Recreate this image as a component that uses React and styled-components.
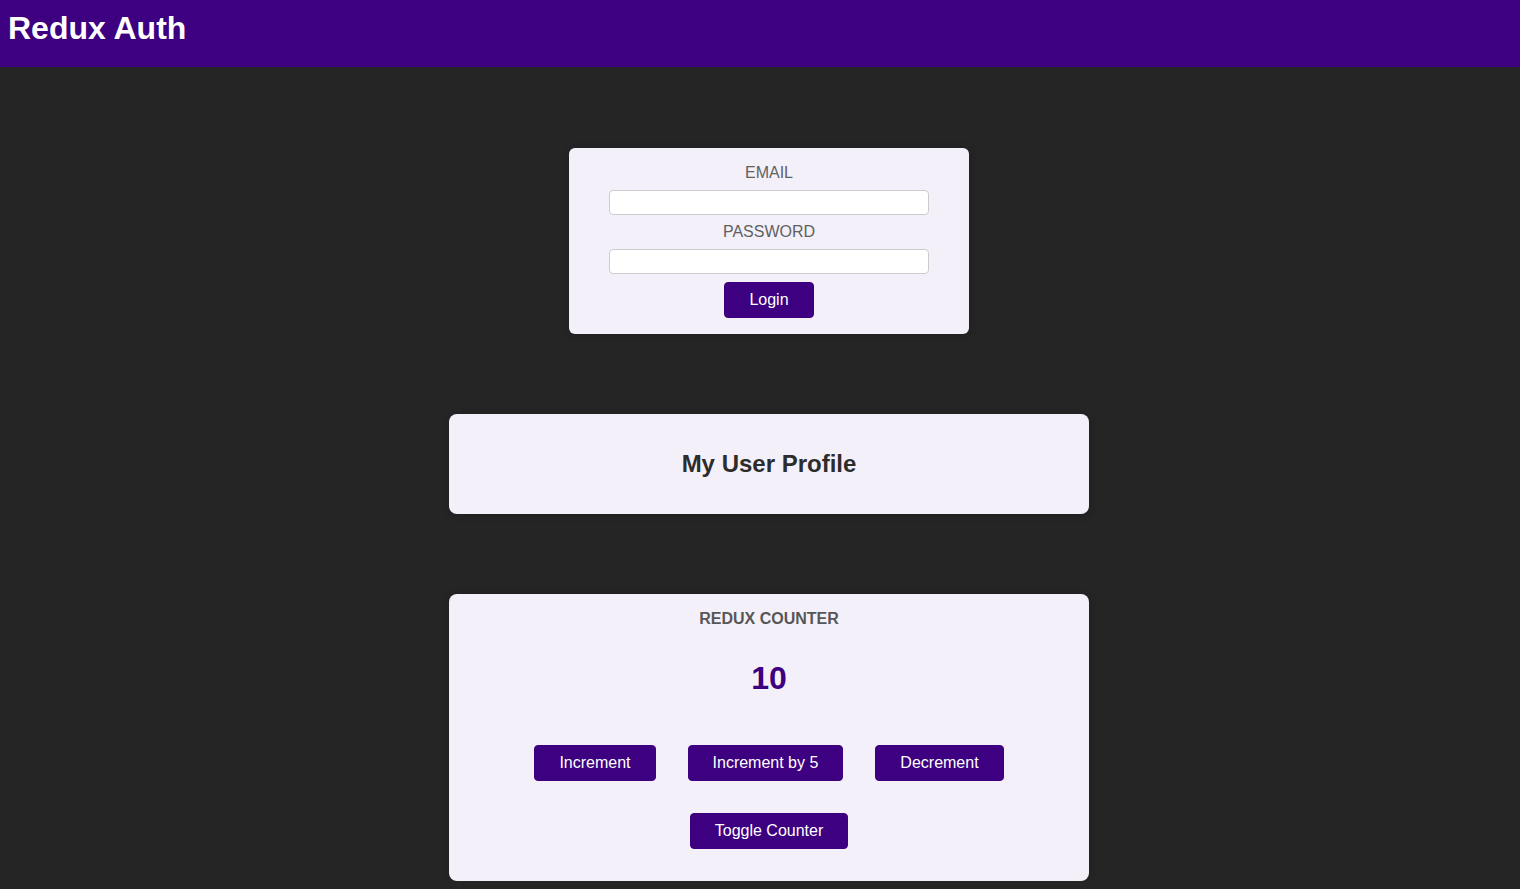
import React from "react";
import styled, { createGlobalStyle } from "styled-components";

const GlobalStyle = createGlobalStyle`
  * { box-sizing: border-box; }
  html, body { margin: 0; padding: 0; }
  body {
    background-color: #252525;
    font-family: "Liberation Sans", Arial, sans-serif;
  }
`;

const Header = styled.header`
  height: 67px;
  padding: 10px 8px 0;
  background-color: #3c0080;
  display: flex;
  align-items: flex-start;
`;

const Title = styled.h1`
  margin: 0;
  color: #ffffff;
  font-size: 2rem;
  font-weight: bold;
`;

const Main = styled.main`
  display: flex;
  flex-direction: column;
  align-items: center;
  gap: 80px;
  padding: 81px 0 0 18px;
`;

const Card = styled.section`
  width: ${(p) => p.$width};
  border-radius: ${(p) => p.$radius || "8px"};
  box-shadow: 0 1px 8px rgba(0, 0, 0, 0.2);
  padding: 1rem;
  text-align: center;
  background-color: #f4f0fa;
`;

const Control = styled.div`
  margin-bottom: 0.5rem;
`;

const Label = styled.label`
  display: block;
  color: #616161;
  text-transform: uppercase;
  margin-bottom: 0.5rem;
  font-size: 16px;
`;

const Input = styled.input`
  display: block;
  width: 20rem;
  height: 25px;
  margin: auto;
  border-radius: 4px;
  padding: 0.25rem;
  border: 1px solid #ccc;
  background: #fff;
  font-family: "Liberation Sans", Arial, sans-serif;
`;

const Button = styled.button`
  font: inherit;
  font-size: 16px;
  cursor: pointer;
  background-color: #3c0080;
  border: 1px solid #3c0080;
  color: #ffffff;
  padding: 0.5rem 1.5rem;
  border-radius: 4px;
  margin: ${(p) => p.$margin || "0"};
  line-height: 18px;
`;

const ProfileTitle = styled.h2`
  margin: 20px 0;
  font-size: 24px;
  line-height: 28px;
  color: #2c2c2c;
`;

const CounterTitle = styled.h1`
  text-transform: uppercase;
  color: #575757;
  margin: 0;
  font-size: 1rem;
  line-height: 18px;
`;

const Value = styled.div`
  font-size: 2rem;
  color: #3c0080;
  margin: 2rem 0;
  font-weight: bold;
  line-height: 37px;
`;

const ButtonRow = styled.div`
  display: flex;
  justify-content: center;
`;

export default function App() {
  return (
    <>
      <GlobalStyle />
      <Header>
        <Title>Redux Auth</Title>
      </Header>
      <Main>
        <Card $width="25rem" $radius="6px">
          <form onSubmit={(e) => e.preventDefault()}>
            <Control>
              <Label htmlFor="email">Email</Label>
              <Input type="email" id="email" />
            </Control>
            <Control>
              <Label htmlFor="password">Password</Label>
              <Input type="password" id="password" />
            </Control>
            <Button>Login</Button>
          </form>
        </Card>
        <Card $width="40rem">
          <ProfileTitle>My User Profile</ProfileTitle>
        </Card>
        <Card $width="40rem">
          <CounterTitle>Redux Counter</CounterTitle>
          <Value>10</Value>
          <ButtonRow>
            <Button $margin="1rem">Increment</Button>
            <Button $margin="1rem">Increment by 5</Button>
            <Button $margin="1rem">Decrement</Button>
          </ButtonRow>
          <Button $margin="1rem">Toggle Counter</Button>
        </Card>
      </Main>
    </>
  );
}
